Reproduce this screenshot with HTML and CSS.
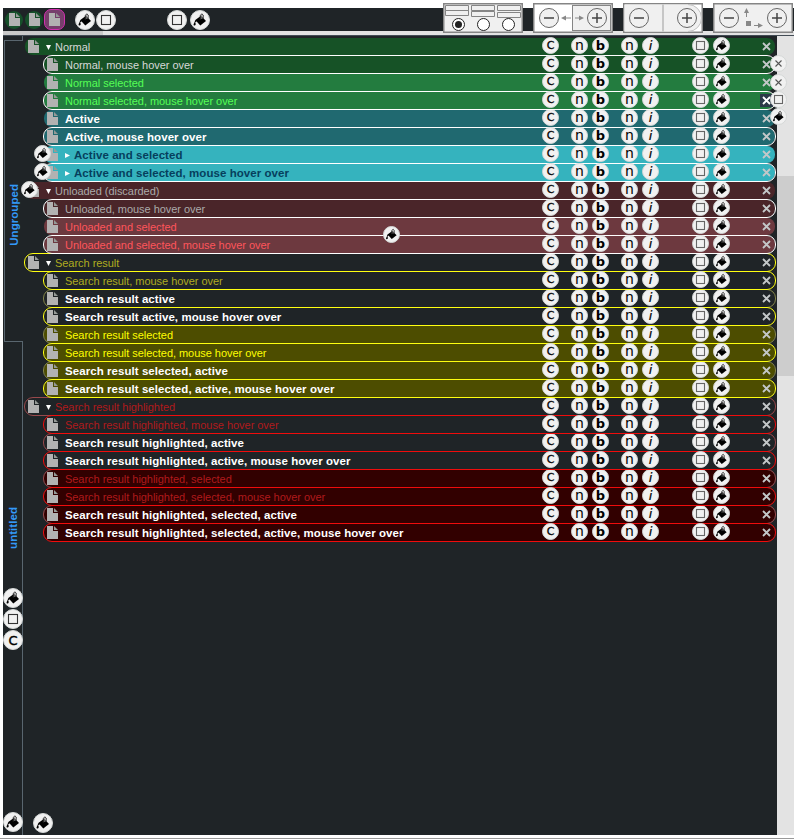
FILE: index.html
```
<!DOCTYPE html>
<html lang="en">
<head>
<meta charset="utf-8">
<title>Tabs</title>
<link rel="stylesheet" href="styles.css">
</head>
<body>
<svg class="defs" aria-hidden="true">
  <symbol id="page" viewBox="0 0 11 13"><path fill="#b2b2b2" d="M0 0H6V5H11V13H0Z"/><path fill="#959a97" d="M7 0L11 4H7Z"/></symbol>
  <symbol id="bucket" viewBox="0 0 20 20"><path d="M5.3 10L11 5.800L16 11L10.3 15.400Z"/><path d="M5.5 10C4.3 11.2 4.8 13 5 12.5L7 11ZM5 11.5C3 14.6 3.3 15.5 4.5 15.5S6.2 14.5 5 11.5Z"/><path d="M10.3 9.5V5.2Q12.2 2.6 13.2 5V9" fill="none" stroke="#333" stroke-width="1"/><path d="M11.8 5V9" stroke="#888" stroke-width="1"/></symbol>
  <symbol id="square" viewBox="0 0 20 20"><rect x="5.5" y="5.5" width="9" height="9" fill="none" stroke="#333" stroke-width="1.1"/></symbol>
  <symbol id="box" viewBox="0 0 17 17"><rect x="4.5" y="4.5" width="8" height="8" fill="none" stroke="#666" stroke-width="1.1"/></symbol>
  <symbol id="cross" viewBox="0 0 9 9"><path d="M1 1L8 8M8 1L1 8" fill="none" stroke="currentColor" stroke-width="1.8"/></symbol>
  <symbol id="thin" viewBox="0 0 9 9"><path d="M1.500 1.500L7.500 7.500M7.500 1.500L1.500 7.500" fill="none" stroke="#555" stroke-width="1.100"/></symbol>
</svg>
<main class="window">
  <header class="toolbar">
    <span class="pin"><svg><use href="#page"/></svg></span>
    <span class="pin"><svg><use href="#page"/></svg></span>
    <span class="pin current"><svg><use href="#page"/></svg></span>
    <span class="btn big first"><svg><use href="#bucket"/></svg></span>
    <span class="btn big"><svg><use href="#square"/></svg></span>
    <span class="btn big second"><svg><use href="#square"/></svg></span>
    <span class="btn big third"><svg><use href="#bucket"/></svg></span>
  </header>
  <div class="hscroll"><div class="thumb"></div></div>
  <div class="content">
    <nav class="groups">
      <div class="stub"></div>
      <div class="group open"><span>Ungrouped</span></div>
      <div class="group"><span>untitled</span></div>
      <div class="tools">
        <span class="btn big"><svg><use href="#bucket"/></svg></span>
        <span class="btn big"><svg><use href="#square"/></svg></span>
        <span class="btn big cap">C</span>
      </div>
      <div class="tools end"><span class="btn big"><svg><use href="#bucket"/></svg></span></div>
    </nav>
    <section class="tabs" id="tabs"></section>
    <div class="vscroll"><div class="thumb"></div></div>
  </div>
</main>
<div class="panels">
  <svg viewBox="0 0 80 30"><rect x=".75" y=".75" width="78.5" height="28.5" fill="#f0f0f0" stroke="#858585" stroke-width="1.5"/>
    <path d="M2.500 2.500H25.500V7.500H2.500ZM2.500 7.500H25.500V12.500H2.500ZM28.500 2.500H51.500V7.500H28.500ZM28.500 8.500H51.500V13.500H28.500ZM54.500 2.500H77.500V7.500H54.500ZM54.500 9.500H77.500V14.500H54.500Z" fill="#f0f0f0" stroke="#858585"/>
    <g fill="#fff" stroke="#222"><circle cx="15.500" cy="21.500" r="6"/><circle cx="40.500" cy="21.500" r="6"/><circle cx="65.500" cy="21.500" r="6"/></g><circle cx="15.500" cy="21.500" r="3.500" fill="#222"/></svg>
  <svg viewBox="0 0 80 30"><rect x=".75" y=".75" width="78.500" height="28.500" fill="#fff" stroke="#858585" stroke-width="1.500"/><rect x="39.500" y="2.500" width="38" height="25" fill="#f0f0f0" stroke="#858585"/>
    <g fill="#f0f0f0" stroke="#666"><circle cx="16" cy="15" r="9.500"/><circle cx="64" cy="15" r="9.500"/></g><path d="M11 15H21M59 15H69M64 10V20" stroke="#444" stroke-width="1.500"/><path d="M32 15H38M42 15H48" stroke="#888"/><path d="M28 15L33 12.500V17.500ZM51 15L46 12.500V17.500Z" fill="#888"/></svg>
  <svg viewBox="0 0 80 30"><rect x=".75" y=".75" width="78.500" height="28.500" fill="#fff" stroke="#858585" stroke-width="1.500"/><path d="M1.500 1.500H65A13.500 13.500 0 0 1 65 28.500H1.500Z" fill="#f0f0f0"/><path d="M65 1.500A13.500 13.500 0 0 1 65 28.500" fill="none" stroke="#c2c2c2"/><path d="M40 1.500V28.500" stroke="#b9b9b9" stroke-width="1.500"/>
    <g fill="#f0f0f0" stroke="#666"><circle cx="16" cy="15" r="9.500"/><circle cx="64" cy="15" r="9.500"/></g><path d="M11 15H21M59 15H69M64 10V20" stroke="#444" stroke-width="1.500"/></svg>
  <svg viewBox="0 0 80 30"><rect x=".75" y=".75" width="78.500" height="28.500" fill="#f0f0f0" stroke="#858585" stroke-width="1.500"/>
    <g fill="#f0f0f0" stroke="#666"><circle cx="16" cy="15" r="9.500"/><circle cx="64" cy="15" r="9.500"/></g><path d="M11 15H21M59 15H69M64 10V20" stroke="#444" stroke-width="1.500"/><path d="M33.500 14V9M41 22.500H46" stroke="#888"/><path d="M33.500 5L36 10H31ZM50 22.500L45 20V25ZM33 18H38V23H33Z" fill="#888"/></svg>
</div>
<span class="btn mark m1"><svg><use href="#bucket"/></svg></span>
<span class="btn mark m2"><svg><use href="#bucket"/></svg></span>
<span class="btn mark m3"><svg><use href="#bucket"/></svg></span>
<span class="btn mark m4"><svg><use href="#bucket"/></svg></span>
<span class="btn mark m5"><svg class="x"><use href="#thin"/></svg></span>
<span class="btn mark m6"><svg class="x"><use href="#thin"/></svg></span>
<span class="btn mark m7"><svg><use href="#box"/></svg></span>
<span class="btn mark m8"><svg><use href="#bucket"/></svg></span>
<span class="btn big mark m9"><svg><use href="#bucket"/></svg></span>
<script src="rows.js"></script>
</body>
</html>
```
FILE: styles.css
```
* { box-sizing: border-box; }
body { margin: 0; height: 840px; position: relative; overflow: hidden; background: #fff; font-family: "Liberation Sans", Arial, sans-serif; }
.defs { position: absolute; width: 0; height: 0; }
svg { display: block; }
.window { padding: 8px 0 0 3px; height: 839px; border-bottom: 1px solid #999; }
.toolbar { height: 23px; background: #1f2427; display: flex; align-items: center; padding-left: 2px; }
.pin { width: 18px; height: 18px; margin-right: 2px; border-radius: 9px; background: #16502a; display: flex; align-items: center; justify-content: flex-start; padding-left: 4px; }
.pin svg, .page { width: 11px; height: 13px; flex: none; }
.pin.current { width: 21px; height: 21px; margin: 0; margin-left: -1px; border: 1px solid #d32fb0; border-radius: 7px; background: #763f6c; }
.btn { width: 17px; height: 17px; flex: none; border-radius: 50%; background: #f1f1f1; border: 1px solid #d5d8d7; display: flex; align-items: center; justify-content: center; color: #000; font-family: "DejaVu Sans", sans-serif; font-size: 14px; font-weight: normal; line-height: 13px; }
.btn svg { width: 17px; height: 17px; flex: none; }
.btn.big { width: 20px; height: 20px; }
.btn.big svg { width: 20px; height: 20px; }
.btn svg.x { width: 9px; height: 9px; }
.first { margin-left: 10px; }
.big.first + .big { margin-left: 1px; }
.second { margin-left: 51px; }
.third { margin-left: 3px; }
.hscroll { height: 4px; background: #e3e3e3; }
.hscroll .thumb { width: 100px; height: 4px; background: #c9c9c9; }
.content { height: 801px; border-top: 1px solid #434c55; display: flex; background: #1f2427; }
.groups { width: 20px; display: flex; flex-direction: column; }
.stub { height: 4px; border-right: 1px solid #59666f; }
.group { height: 207px; border-right: 1px solid #59666f; display: flex; align-items: flex-end; justify-content: center; }
.group.open { height: 302px; margin-left: 1px; border: 1px solid #59666f; border-right: 0; align-items: center; }
.group span { writing-mode: vertical-rl; transform: rotate(180deg); font: bold 11.5px/16px "Liberation Sans", sans-serif; letter-spacing: .05px; color: #3399f8; }
.group.open span { transform: translateY(24px) rotate(180deg); }
.tools { border-right: 1px solid #59666f; padding-top: 39px; display: flex; flex-direction: column; gap: 1px; width: 20px; }
.tools.end { flex: 1; padding: 0 0 3px; justify-content: flex-end; }
.btn.cap { font-size: 13px; -webkit-text-stroke: .4px #000; }
.tabs { width: 754px; padding: 1px 1px 0 1px; }
.row { --bg: #1f2427; height: 19px; margin: 0 0 -1px 19px; border: 1px solid transparent; border-radius: 9px; background: var(--bg); background-clip: padding-box; position: relative; display: flex; align-items: flex-start; padding-left: 3px; color: #d8d8d8; font-size: 11px; }
.row.top { margin-left: 0; }
.page { margin-top: 2px; }
.label { margin: 1px 0 0 7px; height: 17px; line-height: 17px; white-space: nowrap; letter-spacing: -.04px; display: flex; }
.bold .label { font-size: 11.5px; letter-spacing: .06px; }
.arrow { width: 5px; height: 5px; margin: 6px 4px 0 0; background: #fff; clip-path: polygon(0 0, 5px 0, 2.5px 5px); }
.arrow.side { clip-path: polygon(0 0, 5px 2.5px, 0 5px); }
.actions { margin: -1px 4px 0 auto; display: flex; width: 229px; }
.actions .btn:nth-child(2), .actions .btn:nth-child(4) { margin-left: 12px; }
.actions .btn:nth-child(3), .actions .btn:nth-child(5), .actions .btn:nth-child(7) { margin-left: 4px; }
.actions .btn:nth-child(6) { margin-left: 33px; }
.btn.c { font-size: 11px; -webkit-text-stroke: .3px #000; }
.btn.n { padding-bottom: 1px; }
.btn.b { font-weight: bold; font-size: 13px; }
.btn.i { font-style: italic; font-size: 13px; -webkit-text-stroke: .2px #000; }
.close { width: 13px; height: 13px; margin: 3px 0 0 30px; padding: 2px; color: #c3c7c8; flex: none; }
.close svg { width: 9px; height: 9px; }
.close.hot { background: #2c3948; color: #fff; }
.hover { z-index: 1; border-color: #fff; }
.bold { font-weight: bold; color: #fff; }
.normal { --bg: #165226; }
.selected { --bg: #237c3f; color: #55ff55; }
.active { --bg: #206970; }
.actsel { --bg: #35b3be; color: #063f5d; }
.unloaded { --bg: #4a2529; color: #aaa; }
.unsel { --bg: #6d393f; color: #ff555b; }
.search { border-color: #85854a; color: #b0ac20; }
.searchsel { --bg: #4d4d00; border-color: #85854a; color: #ff0; }
.high, .highsel { border-color: #98494c; color: #b01a1c; }
.highsel { --bg: #320000; }
.search.hover, .searchsel.hover, .search.top { border-color: #ff1; }
.high.hover, .highsel.hover { border-color: #f00c0c; }
.search.bold, .searchsel.bold, .high.bold, .highsel.bold { color: #fff; }
.content { height: 800px; }
.vscroll { width: 17px; height: 799px; background: #e3e3e3; padding-top: 140px; }
.vscroll .thumb { height: 200px; background: #cdcdcd; }
.panels { position: absolute; left: 443px; top: 3px; display: flex; gap: 10px; }
.panels svg { width: 80px; height: 30px; }
.mark { position: absolute; z-index: 3; }
.m1 { left: 34px; top: 145px; }
.m2 { left: 34px; top: 163px; }
.m3 { left: 21px; top: 181px; }
.m4 { left: 383px; top: 226px; }
.m5 { left: 770px; top: 55px; }
.m6 { left: 770px; top: 74px; }
.m7 { left: 770px; top: 91px; }
.m8 { left: 770px; top: 108px; }
.m9 { left: 33px; top: 813px; }
```
FILE: rows.js
```
const rows = [
  ["normal top", "Normal"],
  ["normal hover", "Normal, mouse hover over"],
  ["selected", "Normal selected"],
  ["selected hover", "Normal selected, mouse hover over"],
  ["active bold", "Active"],
  ["active bold hover", "Active, mouse hover over"],
  ["bold actsel", "Active and selected"],
  ["bold actsel hover", "Active and selected, mouse hover over"],
  ["unloaded top", "Unloaded (discarded)"],
  ["unloaded hover", "Unloaded, mouse hover over"],
  ["unsel", "Unloaded and selected"],
  ["unsel hover", "Unloaded and selected, mouse hover over"],
  ["search top", "Search result"],
  ["search hover", "Search result, mouse hover over"],
  ["search bold", "Search result active"],
  ["search bold hover", "Search result active, mouse hover over"],
  ["searchsel", "Search result selected"],
  ["searchsel hover", "Search result selected, mouse hover over"],
  ["searchsel bold", "Search result selected, active"],
  ["searchsel bold hover", "Search result selected, active, mouse hover over"],
  ["high top", "Search result highlighted"],
  ["high hover", "Search result highlighted, mouse hover over"],
  ["high bold", "Search result highlighted, active"],
  ["high bold hover", "Search result highlighted, active, mouse hover over"],
  ["highsel", "Search result highlighted, selected"],
  ["highsel hover", "Search result highlighted, selected, mouse hover over"],
  ["highsel bold", "Search result highlighted, selected, active"],
  ["highsel bold hover", "Search result highlighted, selected, active, mouse hover over"]
];
const icon = (id) => `<svg><use href="#${id}"/></svg>`;
document.getElementById("tabs").innerHTML = rows.map(([kind, text], n) => {
  const arrow = kind.includes("top") ? '<i class="arrow"></i>' : kind.includes("actsel") ? '<i class="arrow side"></i>' : "";
  return `<div class="row ${kind}"><svg class="page"><use href="#page"/></svg><div class="label">${arrow}<span>${text}</span></div>
  <div class="actions"><span class="btn c">C</span><span class="btn n">n</span><span class="btn b">b</span><span class="btn n">n</span><span class="btn i">i</span><span class="btn">${icon("box")}</span><span class="btn">${icon("bucket")}</span><span class="close${n === 3 ? " hot" : ""}">${icon("cross")}</span></div></div>`;
}).join("");
```
